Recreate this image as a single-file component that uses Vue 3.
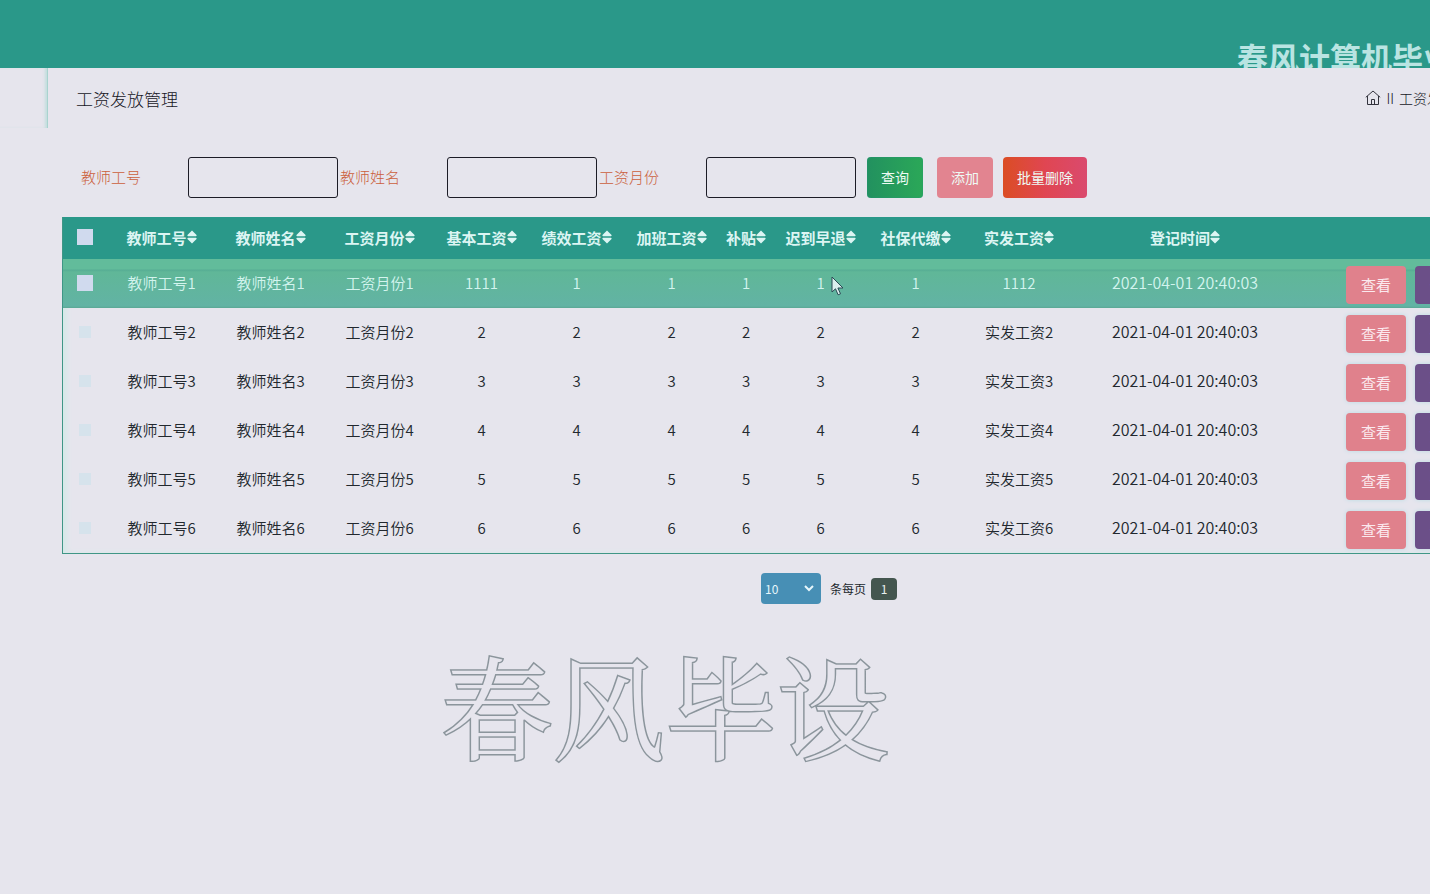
<script setup>
import { ref } from 'vue'

const columns = [
  { key: 'no', title: '教师工号', cls: 'w-wide' },
  { key: 'name', title: '教师姓名', cls: 'w-wide' },
  { key: 'month', title: '工资月份', cls: 'w-wide' },
  { key: 'base', title: '基本工资', cls: 'w-mid' },
  { key: 'merit', title: '绩效工资', cls: 'w-mid' },
  { key: 'overtime', title: '加班工资', cls: 'w-mid' },
  { key: 'allowance', title: '补贴', cls: 'w-small' },
  { key: 'late', title: '迟到早退', cls: 'w-mid' },
  { key: 'social', title: '社保代缴', cls: 'w-mid' },
  { key: 'actual', title: '实发工资', cls: 'w-actual' },
  { key: 'time', title: '登记时间', cls: 'w-time' }
]

const rows = [1, 2, 3, 4, 5, 6].map((n) => ({
  id: n,
  no: `教师工号${n}`,
  name: `教师姓名${n}`,
  month: `工资月份${n}`,
  base: n === 1 ? '1111' : n,
  merit: n,
  overtime: n,
  allowance: n,
  late: n,
  social: n,
  actual: n === 1 ? '1112' : `实发工资${n}`,
  time: '2021-04-01 20:40:03'
}))

const filters = ref([
  { id: 'f-no', label: '教师工号', value: '' },
  { id: 'f-name', label: '教师姓名', value: '' },
  { id: 'f-month', label: '工资月份', value: '' }
])
const pageSize = ref('10')
</script>

<template>
  <div class="page">
    <header class="topbar">
      <span class="brand">春风计算机毕业设计</span>
    </header>

    <div class="titlebar">
      <div class="side"></div>
      <h1>工资发放管理</h1>
      <nav class="crumbs">
        <a href="#" aria-label="首页">
          <svg width="16" height="16" viewBox="0 0 16 16" fill="none" stroke="#33333d" stroke-width="1">
            <path d="M.8 7.3 8 1l7.2 6.3M2.5 6v8.5h11V6M6.5 14.500V9.500h3v5" />
          </svg>
        </a>
        <span>II</span>
        <span>工资发放管理</span>
      </nav>
    </div>

    <main>
      <form class="search" @submit.prevent>
        <div v-for="f in filters" :key="f.id" class="field">
          <label :for="f.id">{{ f.label }}</label>
          <input :id="f.id" v-model="f.value" type="text" />
        </div>
        <div class="actions">
          <button class="btn query" type="submit">查询</button>
          <button class="btn add" type="button">添加</button>
          <button class="btn remove" type="button">批量删除</button>
        </div>
      </form>

      <table>
        <colgroup>
          <col class="w-check" />
          <col v-for="c in columns" :key="c.key" :class="c.cls" />
          <col class="w-ops" />
        </colgroup>
        <thead>
          <tr>
            <th><input type="checkbox" aria-label="全选" /></th>
            <th v-for="c in columns" :key="c.key">
              <span class="head">{{ c.title
                }}<svg width="10" height="14" viewBox="0 0 10 14" fill="currentColor">
                  <path d="M5 .5 9.800 5.200 9 6.200H1L.2 5.200zM5 13.500.2 8.800l.8-1h8l.8 1z" />
                </svg></span>
            </th>
            <th></th>
          </tr>
        </thead>
        <tbody>
          <tr v-for="r in rows" :key="r.id" :class="{ active: r.id === 1 }">
            <td><input type="checkbox" :aria-label="r.no" /></td>
            <td v-for="c in columns" :key="c.key" :class="c.key">
              {{ r[c.key] }}
              <svg v-if="r.id === 1 && c.key === 'late'" class="cursor" width="13" height="20" viewBox="0 0 13 20">
                <path d="M1 1v15l3.500-3.200 2.600 6 2.400-1-2.600-5.800H12z" fill="#dcefee" stroke="#2b4a55" stroke-width="1" />
              </svg>
            </td>
            <td>
              <div class="ops">
                <button class="op view" type="button">查看</button>
                <button class="op edit" type="button">修改</button>
                <button class="op del" type="button">删除</button>
              </div>
            </td>
          </tr>
        </tbody>
      </table>

      <div class="pager">
        <div class="size">
          <select id="size" v-model="pageSize">
            <option>10</option>
            <option>20</option>
            <option>50</option>
          </select>
          <svg width="10" height="7" viewBox="0 0 10 7" fill="none" stroke="#e6f6fb" stroke-width="2">
            <path d="m1 1 4 4 4-4" />
          </svg>
        </div>
        <label for="size">条每页</label>
        <button class="current" type="button">1</button>
      </div>
      <p class="mark">春风毕设</p>
    </main>
  </div>
</template>

<style>
body {
  background: #e6e5ed;
}
</style>

<style scoped>
.page {
  min-height: 100vh;
  overflow: hidden;
  background: #e6e5ed;
  color: #22282e;
  font-family: "Noto Sans CJK SC", sans-serif;
  font-size: 15px;
}
button,
input,
select {
  font-family: inherit;
}
.topbar {
  display: flex;
  justify-content: flex-end;
  height: 68px;
  overflow: hidden;
  background: #2a9889;
}
.brand {
  flex: none;
  margin-right: -86px;
  padding-top: 35px;
  color: #b9e4e2;
  font-size: 31px;
  font-weight: 700;
  line-height: 44px;
  white-space: nowrap;
}
.titlebar {
  display: flex;
  align-items: center;
  height: 60px;
}
.side {
  box-sizing: border-box;
  align-self: stretch;
  width: 48px;
  border-right: 1px solid #a9d3cf;
  box-shadow: inset -3px 0 3px -1px #c2dedd;
}
h1 {
  margin: 0 0 0 28px;
  color: #16161e;
  font-size: 17px;
  font-weight: 300;
}
.crumbs {
  display: flex;
  align-items: center;
  gap: 5px;
  margin-left: auto;
  margin-right: -53px;
  color: #16161e;
  font-size: 14px;
  font-weight: 300;
  white-space: nowrap;
}
.crumbs a {
  display: flex;
}
main {
  padding-left: 62px;
}
.search {
  display: flex;
  align-items: center;
  padding: 29px 0 19px 19px;
}
.field {
  display: flex;
  align-items: center;
  margin-right: 2px;
}
.field label {
  width: 107px;
  padding-bottom: 2px;
  color: #cb5f3c;
  font-weight: 300;
}
.field input {
  box-sizing: border-box;
  width: 150px;
  height: 41px;
  padding: 0 10px;
  border: 1px solid #1c1c26;
  border-radius: 3px;
  background: transparent;
  font-size: 15px;
}
.actions {
  display: flex;
  gap: 10px;
  margin-left: 9px;
}
.btn {
  height: 41px;
  padding: 0 14px 2px;
  border: 0;
  border-radius: 4px;
  color: #eefaf4;
  font-size: 14px;
  white-space: nowrap;
}
.query {
  margin-right: 4px;
  background: linear-gradient(90deg, #22915f, #2ba858);
  box-shadow: inset 0 0 2px #27967a;
}
.add {
  background: #e28490;
}
.remove {
  background: linear-gradient(90deg, #db4d24, #e04652 50%, #da4a6e);
}
table {
  width: 1534px;
  border: 1px solid #3f9686;
  border-top: 0;
  border-collapse: separate;
  border-spacing: 0;
  table-layout: fixed;
  box-shadow: inset 4px 0 5px #d5e9e8;
}
.w-check { width: 44px; }
.w-wide { width: 109px; }
.w-mid { width: 95px; }
.w-small { width: 54px; }
.w-actual { width: 112px; }
.w-time { width: 220px; }
th,
td {
  padding: 0 0 2px;
  text-align: center;
  white-space: nowrap;
}
th {
  height: 40px;
  background: #2a9889;
  color: #dcf5f3;
  font-weight: 700;
}
.head {
  display: flex;
  align-items: center;
  justify-content: center;
}
td {
  height: 47px;
  font-weight: 350;
}
.time {
  padding-bottom: 4px;
  height: 45px;
  font-size: 16px;
}
.active td {
  background: linear-gradient(#62bc9b 0 10px, #56ad94 11px, #60b798 13px, #62b3a4 47px, #5aa794);
  color: #d3f4ee;
}
.late {
  position: relative;
}
.cursor {
  position: absolute;
  top: 17px;
  left: 58px;
}
input[type="checkbox"] {
  display: block;
  width: 12px;
  height: 12px;
  margin: 0 auto;
  appearance: none;
  background: #d6e3ec;
}
th input[type="checkbox"],
.active input[type="checkbox"] {
  width: 16px;
  height: 16px;
  background: #d0daee;
}
.ops {
  display: flex;
  justify-content: center;
  gap: 9px;
  padding-top: 4px;
}
.op {
  width: 60px;
  height: 38px;
  padding: 0;
  border: 0;
  border-radius: 4px;
  color: #fbe9ee;
  font-size: 15px;
  box-shadow: 0 0 4px #b9dce4;
}
.view { background: #e0818c; }
.edit { background: #6b4f88; }
.del { background: #dc4a50; }
.active .op {
  box-shadow: none;
}
.pager {
  display: flex;
  align-items: center;
  justify-content: center;
  width: 1534px;
  margin-top: 19px;
  font-size: 12px;
}
.size {
  position: relative;
  display: flex;
}
.size svg {
  position: absolute;
  top: 12px;
  right: 7px;
  pointer-events: none;
}
select {
  width: 60px;
  height: 31px;
  padding: 0 4px;
  border: 0;
  border-radius: 4px;
  appearance: none;
  background: #478fb5;
  color: #e6f6fb;
  font-size: 12px;
}
.pager label {
  margin: 0 5px 0 9px;
}
.current {
  width: 26px;
  height: 22px;
  padding: 0;
  border: 0;
  border-radius: 4px;
  background: #44564f;
  color: #e8f0f0;
  font-size: 12px;
}
.mark {
  margin: 22px 0 0 379px;
  color: #e6e5ed;
  font-family: "Noto Serif CJK SC", "Noto Sans CJK SC", serif;
  font-size: 112px;
  font-weight: 400;
  line-height: 156px;
  white-space: nowrap;
  -webkit-text-stroke: 3px #8b959c;
  paint-order: stroke fill;
}
</style>
